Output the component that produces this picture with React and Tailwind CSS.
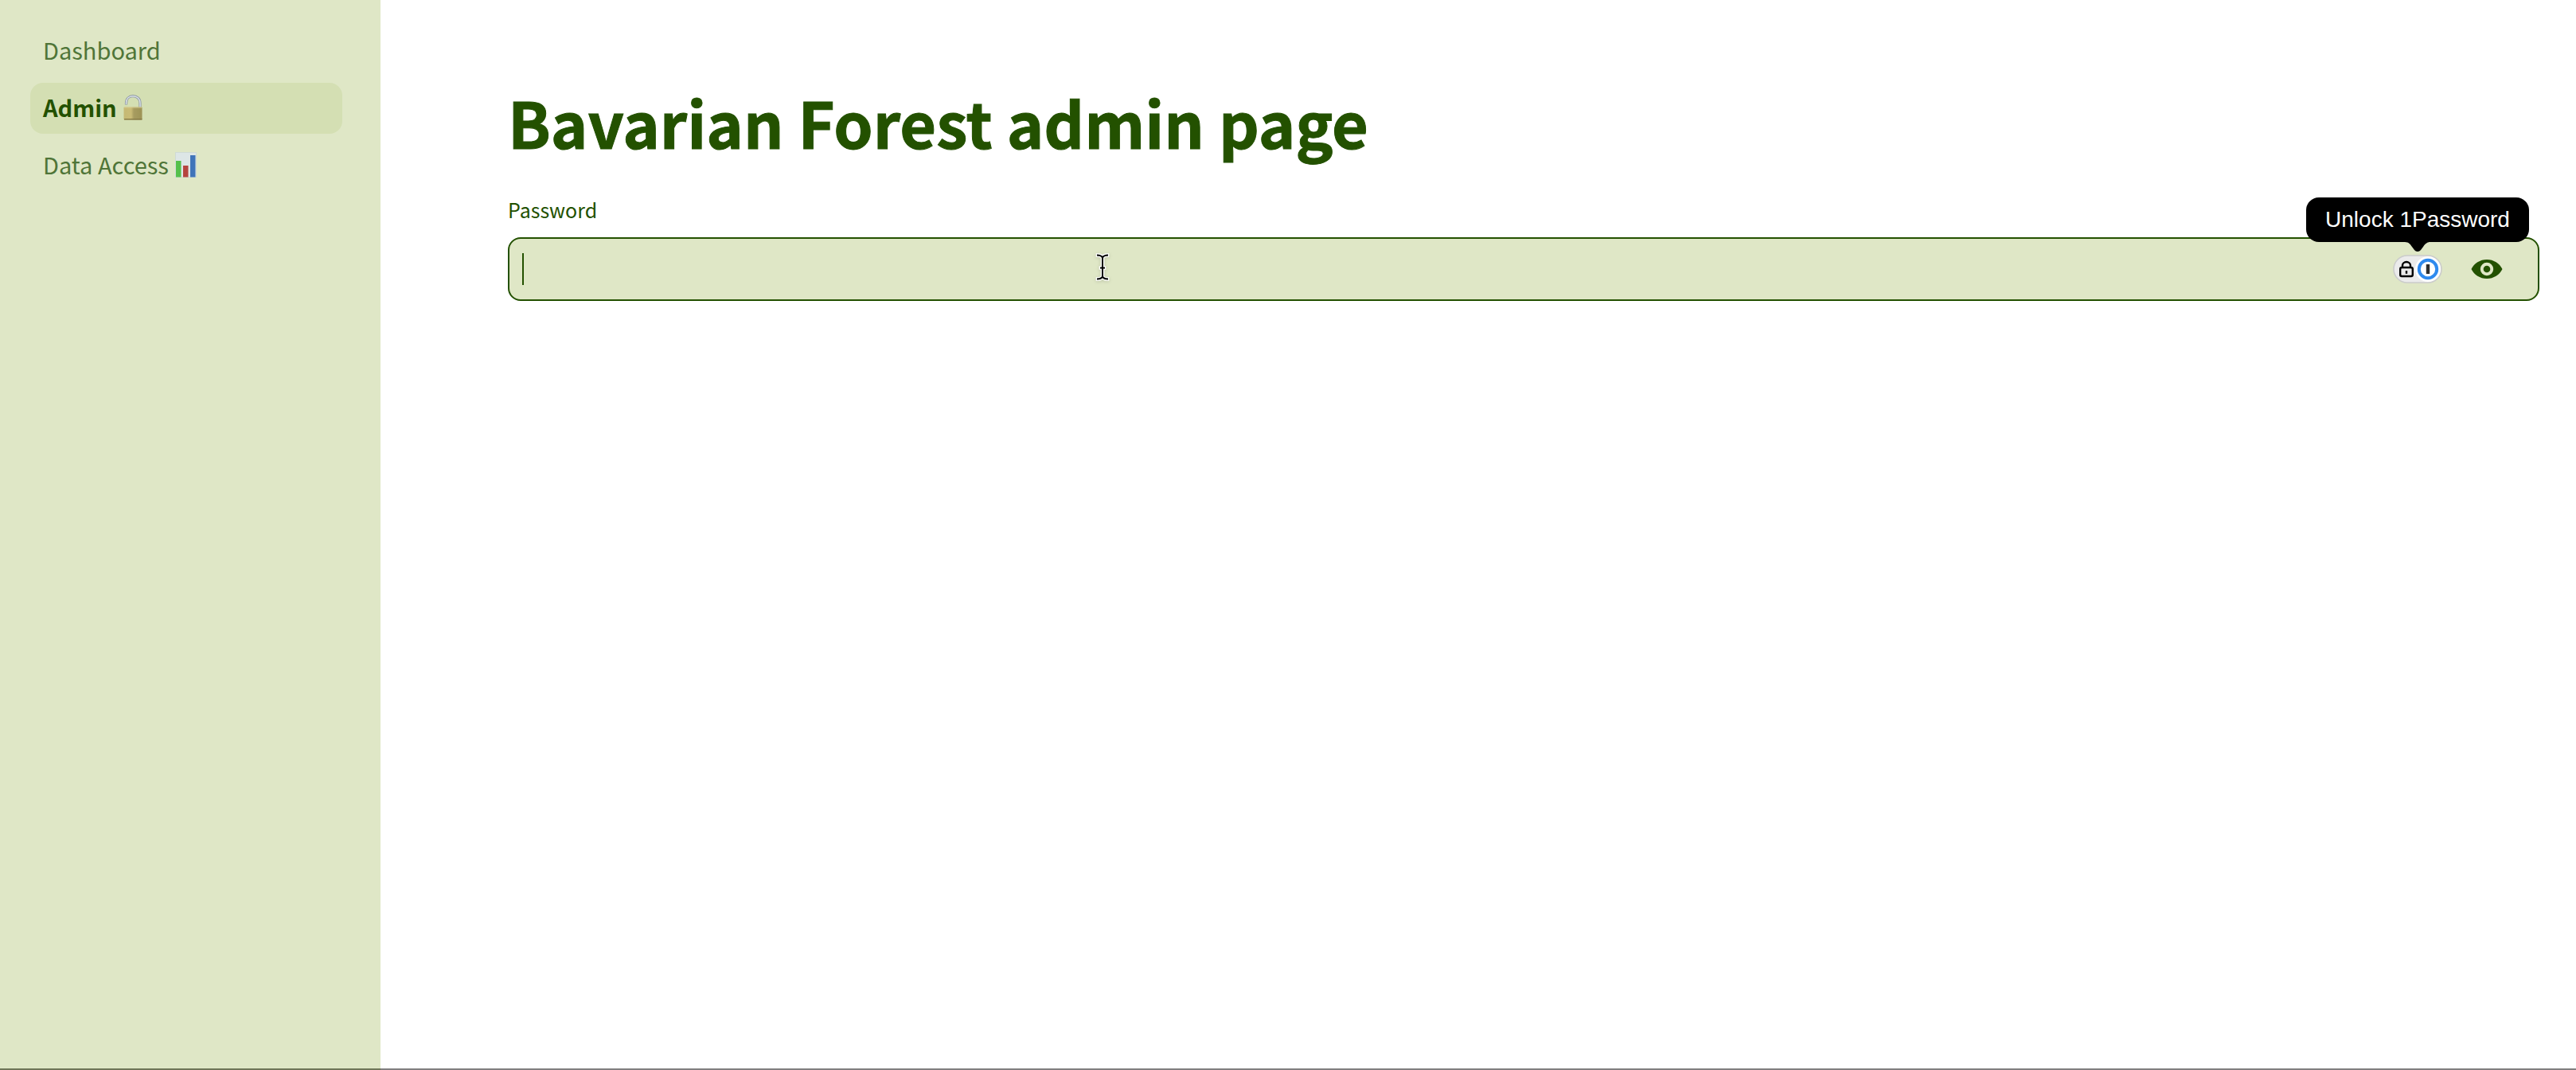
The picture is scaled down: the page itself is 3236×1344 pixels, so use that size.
import React, { useState } from "react";

function OpenPadlock() {
  return (
    <svg className="h-8 w-6 shrink-0" viewBox="0 0 24 32" aria-hidden="true">
      <defs>
        <linearGradient id="brass" x1="0" x2="1" y1="0" y2="0">
          <stop offset="0" stopColor="#c5b974" />
          <stop offset="0.4" stopColor="#c9bb76" />
          <stop offset="0.55" stopColor="#a79c60" />
          <stop offset="1" stopColor="#9d9356" />
        </linearGradient>
      </defs>
      <path d="M3.500 12.500V10.500C3.500 5 7 1.700 12 1.700s9 3.300 9 8.800V17" fill="none" stroke="#8f9aa3" strokeWidth="3.200" />
      <path d="M3.500 12V10.500C3.500 5 7 1.700 12 1.700s9 3.300 9 8.800V17" fill="none" stroke="#dce3ea" strokeWidth="1.400" />
      <rect x="0.500" y="15.500" width="23" height="16" rx="1" fill="url(#brass)" />
      <path d="M1 16h22" stroke="#d8cd92" />
      <path d="M1 30.800h22.500" stroke="#857944" strokeWidth="1.400" />
    </svg>
  );
}

function BarChart() {
  return (
    <svg className="h-8 w-[27px] shrink-0" viewBox="0 0 27 32" aria-hidden="true">
      <rect x="0.500" y="0.500" width="26" height="31" fill="#dde6e6" stroke="#cfdbd6" />
      <rect x="1" y="11" width="6.500" height="20.500" fill="#55c04b" />
      <rect x="10" y="17" width="6.500" height="14.500" fill="#b5443f" />
      <rect x="19" y="4" width="6.500" height="27.500" fill="#3f74b9" />
    </svg>
  );
}

function EyeIcon() {
  return (
    <svg className="h-6 w-10" viewBox="0 0 40 24" aria-hidden="true">
      <path
        fillRule="evenodd"
        fill="#235100"
        d="M20 0C11.500 0 4 4.800 0.500 12 4 19.200 11.500 24 20 24s16-4.800 19.500-12C36 4.800 28.500 0 20 0Zm0 20.200a8.200 8.200 0 1 1 0-16.400 8.200 8.200 0 0 1 0 16.400Z"
      />
      <circle cx="20" cy="12" r="4.300" fill="#235100" />
    </svg>
  );
}

function UnlockBadge() {
  return (
    <svg className="h-9 w-[62px]" viewBox="0 0 62 36" aria-hidden="true">
      <rect x="1" y="1" width="60" height="34" rx="17" fill="#ebebeb" stroke="#cbcccb" strokeWidth="1.600" />
      <circle cx="44" cy="18" r="16" fill="#fff" />
      <circle cx="44" cy="18" r="11.200" fill="#fff" stroke="#2f8aee" strokeWidth="4" />
      <rect x="41.800" y="12" width="4.400" height="12" rx="0.600" fill="#2e2e2e" />
      <rect x="9.200" y="16" width="15.600" height="11" rx="2" fill="none" stroke="#000" strokeWidth="2.400" />
      <path d="M12 16v-2.500a5 4.500 0 0 1 10 0V16" fill="none" stroke="#000" strokeWidth="2.400" />
      <path d="M17 20v3.800" stroke="#000" strokeWidth="2.400" />
    </svg>
  );
}

function TextPointer() {
  return (
    <svg
      className="pointer-events-none absolute left-[735px] top-4 h-10 w-5 drop-shadow-sm"
      viewBox="0 0 20 40"
      fill="none"
      aria-hidden="true"
    >
      <g stroke="#fff" strokeWidth="4.500" strokeLinecap="square">
        <path d="M4 4.500c3 0 5 1 6 3 1-2 3-3 6-3M4 34.500c3 0 5-1 6-3 1 2 3 3 6 3M10 7v25M8 20.500h4" />
      </g>
      <path
        stroke="#000"
        strokeWidth="2"
        d="M3 4.500c4 0 6 1 7 3 1-2 3-3 7-3M3 34.500c4 0 6-1 7-3 1 2 3 3 7 3M10 7v25M7 20.500h6"
      />
    </svg>
  );
}

const links = [
  { label: "Dashboard" },
  { label: "Admin", icon: <OpenPadlock />, active: true },
  { label: "Data Access", icon: <BarChart /> },
];

export default function App() {
  const [visible, setVisible] = useState(false);

  return (
    <div className="flex min-h-screen bg-white font-['Noto_Sans_CJK_SC','Noto_Sans',sans-serif] text-[#235100]">
      <aside className="w-[478px] shrink-0 border-b-2 border-[#6f7658] bg-[#dfe7c6] pl-[38px] pr-12 pt-8">
        <nav className="flex flex-col gap-2">
          {links.map((link) => (
            <a
              key={link.label}
              href="#"
              aria-current={link.active ? "page" : undefined}
              className={
                link.active
                  ? "flex h-16 items-center gap-2 rounded-2xl bg-[#d4dfb3] px-4 pb-0.5 text-[29px] font-bold"
                  : "flex h-16 items-center gap-2 rounded-2xl px-4 pb-0.5 text-[29px] text-[#4f7538]"
              }
            >
              <span>{link.label}</span>
              {link.icon}
            </a>
          ))}
        </nav>
      </aside>

      <main className="min-w-0 flex-1 border-b-2 border-[#817f80] pl-40 pr-[46px] pt-[100px]">
        <h1 className="text-[79px] font-bold leading-[106px] [-webkit-text-stroke:1px_#235100]">
          Bavarian Forest admin page
        </h1>
        <label htmlFor="password" className="mt-9 block text-[25px] leading-[42px]">
          Password
        </label>
        <div className="relative mt-3.5 flex h-20 items-center rounded-2xl border-2 border-[#235100] bg-[#dfe7c6]">
          <input
            id="password"
            type={visible ? "text" : "password"}
            className="h-full min-w-0 flex-1 rounded-2xl bg-transparent px-4 text-[29px] caret-transparent outline-none"
          />
          <span className="pointer-events-none absolute left-4 top-[18px] h-10 w-0.5 bg-[#235100]" />
          <TextPointer />
          <div className="relative mr-9 flex">
            <button type="button" aria-label="Unlock 1Password" aria-describedby="unlock-tip" className="flex">
              <UnlockBadge />
            </button>
            <div
              id="unlock-tip"
              role="tooltip"
              className="absolute bottom-[52px] left-1/2 flex h-14 w-[280px] -translate-x-[140px] items-center justify-center whitespace-nowrap rounded-2xl bg-black font-['Liberation_Sans',Arial,sans-serif] text-[28px] text-white"
            >
              Unlock 1Password
              <svg className="absolute left-[124px] top-full h-3 w-8" viewBox="0 0 32 12" aria-hidden="true">
                <path d="M0 0c5 0 7 3 9 6l3 4c2 2.500 6 2.500 8 0l3-4c2-3 4-6 9-6Z" />
              </svg>
            </div>
          </div>
          <button
            type="button"
            aria-label="Show password text"
            onClick={() => setVisible(!visible)}
            className="mr-11 flex"
          >
            <EyeIcon />
          </button>
        </div>
      </main>
    </div>
  );
}
